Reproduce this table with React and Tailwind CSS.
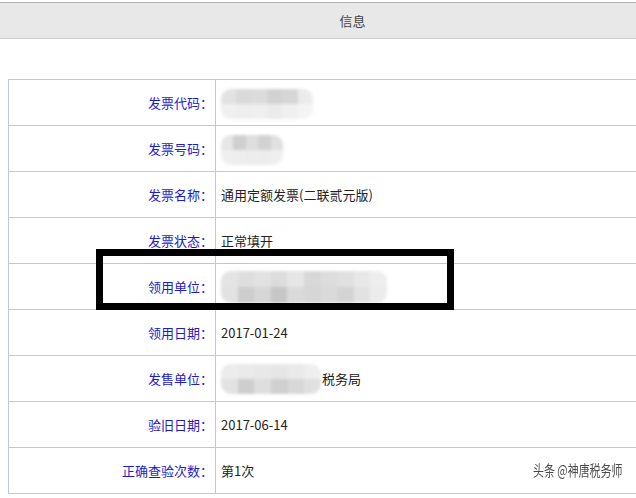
import React from "react";

function Blob({ cols, w, h }) {
  return (
    <div className="relative blur-[1.5px]" style={{ width: w, height: h }}>
      <div className="flex h-full w-full flex-col overflow-hidden rounded-[10px]">
        <div className="flex flex-1">
          {cols[0].map((c, i) => (
            <div key={i} className="flex-1" style={{ background: c }} />
          ))}
        </div>
        <div className="flex flex-1">
          {cols[1].map((c, i) => (
            <div key={i} className="flex-1" style={{ background: c }} />
          ))}
        </div>
      </div>
    </div>
  );
}

const rows = [
  { label: "发票代码：", blob: "a" },
  { label: "发票号码：", blob: "b" },
  { label: "发票名称：", value: "通用定额发票(二联贰元版)" },
  { label: "发票状态：", value: "正常填开" },
  { label: "领用单位：", blob: "c" },
  { label: "领用日期：", value: "2017-01-24" },
  { label: "发售单位：", blob: "d" },
  { label: "验旧日期：", value: "2017-06-14" },
  { label: "正确查验次数：", value: "第1次" },
];

function Value({ row }) {
  if (row.value) return <span>{row.value}</span>;
  if (row.blob === "a")
    return (
      <div className="mt-[2px]">
        <Blob
          w={92}
          h={30}
          cols={[
            ["#e2e2e2", "#dadada", "#dcdcdc", "#d2d2d2", "#d6d6d6", "#ebebeb"],
            ["#f0f0f0", "#eeeeee", "#efefef", "#ebebeb", "#efefef", "#f4f4f4"],
          ]}
        />
      </div>
    );
  if (row.blob === "b")
    return (
      <div className="mt-[2px]">
        <Blob
          w={62}
          h={30}
          cols={[
            ["#e6e6e6", "#cfcfcf", "#dedede", "#d2d2d2", "#e0e0e0"],
            ["#efefef", "#eeeeee", "#ededed", "#ececec", "#efefef"],
          ]}
        />
      </div>
    );
  if (row.blob === "c")
    return (
      <Blob
        w={166}
        h={32}
        cols={[
          ["#e4e4e4", "#dedede", "#e2e2e2", "#dcdcdc", "#e6e6e6", "#d8d8d8", "#dcdcdc", "#e0e0e0", "#e8e8e8", "#eeeeee"],
          ["#e2e2e2", "#cdcdcd", "#d6d6d6", "#c6c6c6", "#dadada", "#d6d6d6", "#dadada", "#d4d4d4", "#e2e2e2", "#ececec"],
        ]}
      />
    );
  return (
    <div className="flex items-center">
      <Blob
        w={100}
        h={30}
        cols={[
          ["#ececec", "#eaeaea", "#e8e8e8", "#e6e6e6", "#eaeaea", "#efefef"],
          ["#e2e2e2", "#cecece", "#dedede", "#d0d0d0", "#d8d8d8", "#e0e0e0"],
        ]}
      />
      <span className="ml-[1px]">税务局</span>
    </div>
  );
}

export default function App() {
  return (
    <div
      className="relative h-[498px] w-[636px] overflow-hidden bg-white text-[13px]"
      style={{ fontFamily: '"Noto Sans CJK SC", "Microsoft YaHei", sans-serif' }}
    >
      <div className="mt-[2px] flex h-[37px] items-center justify-center border-t border-b border-t-[#b4b4b4] border-b-[#cdcdcd] bg-[#e8e8e8] pl-[69px] text-[13px] text-[#444]">
        信息
      </div>
      <div className="h-[40px]" />
      <div className="ml-[8px] w-[640px] border-t border-l border-[#bccbd3]">
        {rows.map((row, i) => (
          <div key={i} className="flex h-[46px] border-b border-[#bccbd3]">
            <div className="flex w-[207px] items-center justify-end border-r border-[#bccbd3] pr-[2px] text-[#1c1cc8]">
              {row.label}
            </div>
            <div className="flex flex-1 items-center pl-[5px] text-[#222]">
              <Value row={row} />
            </div>
          </div>
        ))}
      </div>

      <div className="absolute left-[96px] top-[249px] h-[61px] w-[358px] border-[7px] border-black" />

      <div
        className="absolute left-[533px] top-[460px] origin-left scale-x-[0.73] whitespace-nowrap text-[15px] leading-[20px] text-[#4a4a4a]"
        style={{ textShadow: "1px 1px 0 #fff, -1px -1px 0 #fff, 1px -1px 0 #fff, -1px 1px 0 #fff" }}
      >
        头条 @神唐税务师
      </div>
    </div>
  );
}
